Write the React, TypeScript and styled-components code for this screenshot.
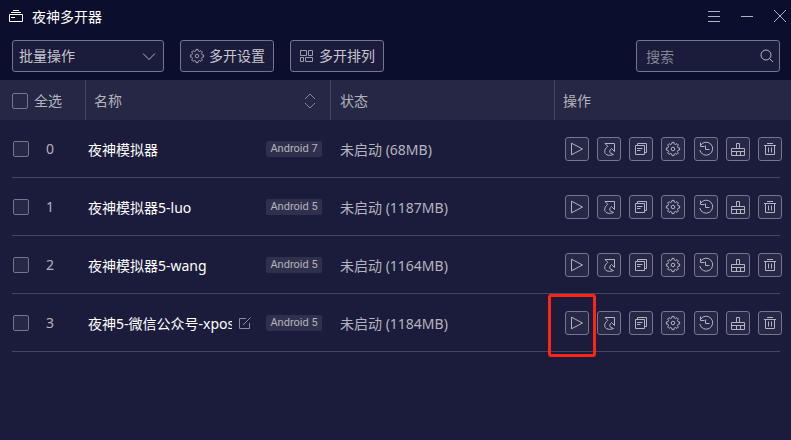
import React from "react";
import styled, { createGlobalStyle } from "styled-components";

const GlobalStyle = createGlobalStyle`
  * { box-sizing: border-box; }
  body {
    margin: 0;
    background: #1b1c3b;
    color: #b4b4be;
    font: 14px/20px "Noto Sans", "Noto Sans CJK SC", sans-serif;
  }
  button, input, select { font: inherit; color: inherit; margin: 0; }
`;

const Page = styled.main`
  min-height: 100vh;
`;

const Top = styled.header`
  background: #0c0e2e;
`;

const TitleBar = styled.div`
  display: flex;
  align-items: center;
  height: 32px;
  padding: 0 3px 0 8px;
`;

const Title = styled.h1`
  flex: 1;
  margin: 0 0 0 8px;
  padding-top: 2px;
  font-size: 14px;
  font-weight: 400;
  color: #fff;
`;

const WindowButtons = styled.div`
  display: flex;
  gap: 17px;
`;

const WindowButton = styled.button`
  display: flex;
  padding: 0;
  border: 0;
  background: none;
  color: #b2b3bf;
`;

const Toolbar = styled.div`
  display: flex;
  gap: 16px;
  padding: 8px 11px 8px 12px;
`;

const Field = styled.div<{ $width: number; $push?: boolean }>`
  display: flex;
  align-items: center;
  position: relative;
  width: ${(p) => p.$width}px;
  height: 32px;
  margin-left: ${(p) => (p.$push ? "auto" : "0")};
  border: 1px solid #75768a;
  border-radius: 3px;
  background: #1b1c3b;
`;

const FieldIcon = styled.span`
  position: absolute;
  right: 4px;
  display: flex;
  pointer-events: none;
`;

const Select = styled.select`
  appearance: none;
  width: 100%;
  height: 30px;
  padding: 0 28px 0 6px;
  border: 0;
  background: transparent;
  color: #c6c6ce;
`;

const SearchInput = styled.input`
  width: 100%;
  height: 30px;
  padding: 0 28px 0 9px;
  border: 0;
  outline: 0;
  background: transparent;
  &::placeholder { color: #858693; opacity: 1; }
`;

const ToolButton = styled.button`
  display: flex;
  align-items: center;
  justify-content: center;
  gap: 4px;
  width: 94px;
  height: 32px;
  padding: 0;
  border: 1px solid #75768a;
  border-radius: 3px;
  background: #1b1c3b;
  color: #c6c6ce;
  white-space: nowrap;
  & svg { color: #9c9dab; }
`;

const Table = styled.table`
  width: 100%;
  table-layout: fixed;
  border-collapse: separate;
  border-spacing: 0;
`;

const HeadRow = styled.tr`
  height: 40px;
  background: #252744;
`;

const HeadCell = styled.th<{ $width?: number; $pad: number }>`
  width: ${(p) => (p.$width ? `${p.$width}px` : "auto")};
  padding: 2px 0 0 ${(p) => p.$pad}px;
  font-weight: 400;
  text-align: left;
  & + & { border-left: 1px solid #45475f; }
`;

const HeadLine = styled.div`
  display: flex;
  align-items: center;
  justify-content: space-between;
  padding-right: 12px;
  & svg { color: #85868f; }
`;

const SelectAll = styled.label`
  display: flex;
  align-items: center;
  gap: 6px;
`;

const Row = styled.tr`
  height: 58px;
  background: linear-gradient(#45465e, #45465e) 12px 100% / calc(100% - 23px) 1px no-repeat;
`;

const Cell = styled.td<{ $pad: number; $right?: number }>`
  padding: 0 ${(p) => p.$right ?? 0}px 0 ${(p) => p.$pad}px;
  white-space: nowrap;
`;

const Line = styled.div<{ $gap?: number }>`
  display: flex;
  align-items: center;
  justify-content: ${(p) => (p.$gap ? "flex-start" : "space-between")};
  gap: ${(p) => p.$gap ?? 0}px;
`;

const Check = styled.input`
  appearance: none;
  flex: none;
  width: 16px;
  height: 16px;
  border: 1px solid #75768a;
  border-radius: 2px;
  background: #262845;
  &:checked { background: #75768a; }
`;

const Name = styled.span`
  width: 144px;
  padding-top: 2px;
  overflow: hidden;
  color: #fff;
`;

const Status = styled.div`
  padding-top: 2px;
`;

const EditButton = styled.button`
  display: flex;
  padding: 0;
  border: 0;
  background: none;
  color: #8b8c9a;
`;

const Badge = styled.span`
  width: 56px;
  height: 16px;
  margin-left: auto;
  margin-right: 8px;
  border-radius: 2px;
  background: #2f314c;
  font: 11px/16px Roboto, sans-serif;
  text-align: center;
`;

const ActionSlot = styled.div`
  position: relative;
`;

const ActionButton = styled.button`
  display: flex;
  width: 24px;
  height: 24px;
  padding: 0;
  border: 1px solid #75768a;
  border-radius: 3px;
  background: #262845;
  color: #b4b4be;
`;

const Highlight = styled.span`
  position: absolute;
  top: -17px;
  left: -17px;
  width: 48px;
  height: 63px;
  border: 3px solid #ff2416;
  border-radius: 3px;
  pointer-events: none;
`;

type IconProps = { size: number; box?: string; children: React.ReactNode };

function Icon({ size, box, children }: IconProps) {
  return (
    <svg width={size} height={size} viewBox={box ?? `0 0 ${size} ${size}`} fill="none" stroke="currentColor" aria-hidden="true">
      {children}
    </svg>
  );
}

function gearPath(cx: number, cy: number, inner: number, outer: number) {
  const teeth = 8;
  const points: string[] = [];
  for (let i = 0; i < teeth; i++) {
    [[-0.3, inner], [-0.2, outer], [0.2, outer], [0.3, inner]].forEach(([turn, r]) => {
      const a = ((i + turn) / teeth) * Math.PI * 2;
      points.push(`${(cx + r * Math.sin(a)).toFixed(2)} ${(cy - r * Math.cos(a)).toFixed(2)}`);
    });
  }
  return `M${points.join("L")}Z`;
}

const Gear = ({ c }: { c: number }) => (
  <>
    <path d={gearPath(c, c, 5.2, 6.7)} strokeLinejoin="round" />
    <circle cx={c} cy={c} r="1.8" />
  </>
);

const actions: { label: string; art: React.ReactNode }[] = [
  { label: "启动", art: <path d="M6.5 6.2 17.5 12 6.5 17.8Z" /> },
  {
    label: "快捷方式",
    art: (
      <path
        d="M8 6.5H17.5V14.5L14.5 11.5C12.5 13 12.3 15 13.5 16.2L16.5 17.5C13 19 8.5 18.5 7.8 15.5C7.2 13 8.8 11 10.8 9.3Z"
        strokeLinejoin="round"
      />
    ),
  },
  {
    label: "复制",
    art: <path d="M6.5 8.5H15.5V17.5H6.5ZM8.5 8.5V6.5H17.5V15.5H15.5M8 11.5H13.5M8 13.5H11.5" />,
  },
  { label: "设置", art: <Gear c={12} /> },
  {
    label: "备份还原",
    art: <path d="M6.5 8.5A6.5 6.5 0 1 1 5.8 13M6.5 5.5V9.5H10.5M11.5 8.5V12.5H15.5" />,
  },
  {
    label: "清理",
    art: <path d="M10.5 11V6.5H13.5V11M5.5 18.5V11.5H18.5V18.5ZM5.5 14.5H18.5M10.5 15V18M14.5 15V18" />,
  },
  {
    label: "删除",
    art: <path d="M6 8.5H18M9 6.5H15M7.5 8.5V17.5H16.5V8.5M10.5 10.5V15.5M13.5 10.5V15.5" />,
  },
];

const emulators = [
  { id: 0, name: "夜神模拟器", version: "Android 7", status: "未启动 (68MB)" },
  { id: 1, name: "夜神模拟器5-luo", version: "Android 5", status: "未启动 (1187MB)" },
  { id: 2, name: "夜神模拟器5-wang", version: "Android 5", status: "未启动 (1164MB)" },
  { id: 3, name: "夜神5-微信公众号-xpos", version: "Android 5", status: "未启动 (1184MB)", editable: true, highlighted: true },
];

export default function App() {
  return (
    <Page>
      <GlobalStyle />
      <Top>
        <TitleBar>
          <Icon size={16}>
            <path stroke="#fff" d="M1.5 6.5H14.5V13.5H1.5ZM3 4.5H13M5 2.5H11M3 9.5H7" />
          </Icon>
          <Title>夜神多开器</Title>
          <WindowButtons>
            <WindowButton aria-label="菜单"><Icon size={16}><path d="M2 3.5H14M2 8.5H14M2 13.5H14" /></Icon></WindowButton>
            <WindowButton aria-label="最小化"><Icon size={16}><path d="M2 8.5H14" /></Icon></WindowButton>
            <WindowButton aria-label="关闭"><Icon size={16}><path d="M2 2 14 14M14 2 2 14" /></Icon></WindowButton>
          </WindowButtons>
        </TitleBar>
        <Toolbar>
          <Field $width={152}>
            <Select aria-label="批量操作"><option>批量操作</option></Select>
            <FieldIcon><Icon size={20}><path d="M4 7.5 10 13.5 16 7.5" /></Icon></FieldIcon>
          </Field>
          <ToolButton><Icon size={16}><Gear c={8} /></Icon>多开设置</ToolButton>
          <ToolButton>
            <Icon size={16}><path d="M1.5 2.5H7.5V7.5H1.5ZM9.5 2.5H13.5V7.5H9.5ZM1.5 9.5H4.5V13.5H1.5ZM6.5 9.5H13.5V13.5H6.5Z" /></Icon>
            多开排列
          </ToolButton>
          <Field $width={144} $push>
            <SearchInput type="text" aria-label="搜索" placeholder="搜索" />
            <FieldIcon><Icon size={16}><circle cx="7" cy="7" r="5" /><path d="M10.5 10.5 14 14" /></Icon></FieldIcon>
          </Field>
        </Toolbar>
      </Top>
      <Table>
        <thead>
          <HeadRow>
            <HeadCell $width={85} $pad={12}><SelectAll><Check type="checkbox" />全选</SelectAll></HeadCell>
            <HeadCell $width={245} $pad={8}>
              <HeadLine>
                名称
                <Icon size={16}><path d="M3 6 8 1 13 6M3 10 8 15 13 10" /></Icon>
              </HeadLine>
            </HeadCell>
            <HeadCell $pad={9}>状态</HeadCell>
            <HeadCell $width={237} $pad={8}>操作</HeadCell>
          </HeadRow>
        </thead>
        <tbody>
          {emulators.map((e) => (
            <Row key={e.id}>
              <Cell $pad={13}>
                <Line $gap={17}>
                  <Check type="checkbox" id={`pick-${e.id}`} />
                  <label htmlFor={`pick-${e.id}`}>{e.id}</label>
                </Line>
              </Cell>
              <Cell $pad={3}>
                <Line $gap={5}>
                  <Name>{e.name}</Name>
                  {e.editable && (
                    <EditButton aria-label="重命名">
                      <Icon size={16}><path d="M9 3.5H2.5V13.5H12.5V8M6 10 13.5 2.5" /></Icon>
                    </EditButton>
                  )}
                  <Badge>{e.version}</Badge>
                </Line>
              </Cell>
              <Cell $pad={10}><Status>{e.status}</Status></Cell>
              <Cell $pad={11} $right={9}>
                <Line>
                  {actions.map((a, i) => (
                    <ActionSlot key={a.label}>
                      <ActionButton aria-label={a.label}>
                        <Icon size={22} box="1 1 22 22">{a.art}</Icon>
                      </ActionButton>
                      {e.highlighted && i === 0 && <Highlight />}
                    </ActionSlot>
                  ))}
                </Line>
              </Cell>
            </Row>
          ))}
        </tbody>
      </Table>
    </Page>
  );
}
